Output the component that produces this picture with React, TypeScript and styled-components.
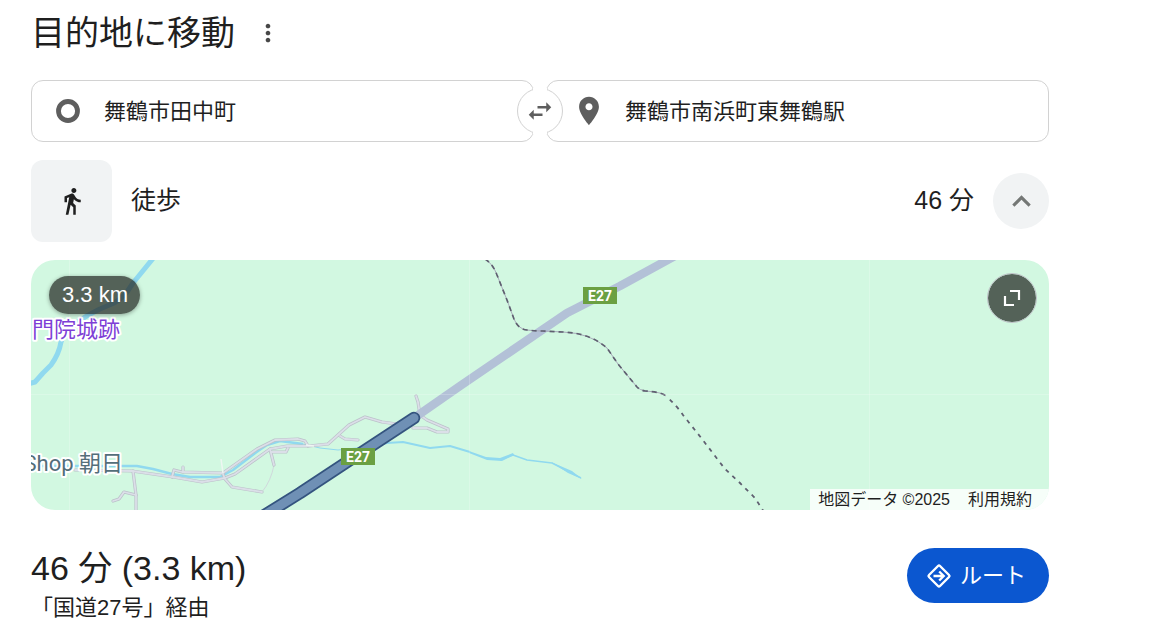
import React from "react";
import styled, { createGlobalStyle } from "styled-components";

const GlobalStyle = createGlobalStyle`
  *, *::before, *::after { box-sizing: border-box; }
  body {
    margin: 0;
    background: #fff;
    color: #1f1f1f;
    font-family: "Liberation Sans", "Noto Sans CJK JP", sans-serif;
  }
  button, input { font-family: inherit; color: inherit; }
  button { border: 0; padding: 0; cursor: pointer; }
  svg { display: block; flex: none; }
`;

const Page = styled.main`
  padding: 8px 116px 12px 31px;
`;

const Header = styled.header`
  display: flex;
  align-items: center;
  gap: 19px;
  height: 50px;
`;

const Title = styled.h1`
  margin: 0;
  font-size: 34px;
  line-height: 50px;
  font-weight: 400;
`;

const MenuButton = styled.button`
  display: flex;
  background: none;
  color: #474747;
`;

const Endpoints = styled.form`
  position: relative;
  display: grid;
  grid-template-columns: 1fr 1fr;
  gap: 12px;
  margin-top: 22px;
`;

const Field = styled.label<{ $inset: number }>`
  min-width: 0;
  display: flex;
  align-items: center;
  gap: 19px;
  height: 62px;
  padding: 0 24px 0 ${(p) => p.$inset}px;
  border: 1px solid #d2d2d2;
  border-radius: 12px;
  color: #5e5e5e;
`;

const FieldInput = styled.input`
  flex: 1;
  min-width: 0;
  padding: 2px 0 0;
  border: 0;
  outline: 0;
  background: none;
  color: #1f1f1f;
  font-size: 22px;
  line-height: 32px;
`;

const SwapButton = styled.button`
  position: absolute;
  top: 50%;
  left: 50%;
  width: 46px;
  height: 46px;
  margin: -23px 0 0 -23px;
  display: flex;
  align-items: center;
  justify-content: center;
  border: 1px solid #d2d2d2;
  border-radius: 50%;
  background: #fff;
  color: #5e5e5e;

  &::before {
    content: "";
    position: absolute;
    top: -1px;
    bottom: -1px;
    left: 15px;
    right: 15px;
    background: #fff;
  }

  svg { position: relative; }
`;

const ModeRow = styled.section`
  display: flex;
  align-items: center;
  gap: 19px;
  margin-top: 18px;
  font-size: 25px;
  line-height: 36px;
`;

const ModeTile = styled.div`
  display: flex;
  align-items: center;
  justify-content: center;
  width: 81px;
  height: 82px;
  border-radius: 12px;
  background: #f1f3f4;
`;

const ModeText = styled.span<{ $grow?: boolean }>`
  flex: ${(p) => (p.$grow ? 1 : "none")};
  padding-bottom: 2px;
`;

const CollapseButton = styled.button`
  display: flex;
  align-items: center;
  justify-content: center;
  width: 56px;
  height: 56px;
  border-radius: 50%;
  background: #f1f3f4;
  color: #747775;
`;

const MapCard = styled.section`
  position: relative;
  height: 250px;
  margin-top: 18px;
  border-radius: 24px;
  overflow: hidden;
  background: #d2f8e1;
`;

const DistancePill = styled.span`
  position: absolute;
  top: 16px;
  left: 18px;
  padding: 0 12px 0 13px;
  border-radius: 19px;
  background: rgba(32, 37, 33, 0.71);
  box-shadow: 0 1px 4px rgba(0, 0, 0, 0.35);
  color: #fff;
  font-size: 22px;
  line-height: 38px;
`;

const ExpandButton = styled.button`
  position: absolute;
  top: 13px;
  right: 12px;
  display: flex;
  align-items: center;
  justify-content: center;
  width: 50px;
  height: 50px;
  border: 1px solid #bdc1c6;
  border-radius: 50%;
  background: rgba(32, 37, 33, 0.71);
  background-clip: padding-box;
  color: #fff;
`;

const Attribution = styled.footer`
  position: absolute;
  right: 0;
  bottom: 0;
  display: flex;
  gap: 18px;
  padding: 0 17px 0 8px;
  background: rgba(255, 255, 255, 0.8);
  color: #1f1f1f;
  font-size: 16px;
  line-height: 21px;
`;

const TermsLink = styled.a`
  color: inherit;
  text-decoration: none;
`;

const Summary = styled.section`
  display: flex;
  align-items: flex-start;
  justify-content: space-between;
  margin-top: 34px;
`;

const Duration = styled.h2`
  margin: 0;
  font-size: 34px;
  line-height: 48px;
  font-weight: 400;
`;

const Via = styled.p`
  margin: 0;
  font-size: 22px;
  line-height: 32px;
`;

const RouteButton = styled.button`
  display: flex;
  align-items: center;
  gap: 8px;
  height: 55px;
  margin-top: 4px;
  padding: 0 23px 0 19px;
  border-radius: 28px;
  background: #0b57d0;
  color: #fff;
  font-size: 22px;
  line-height: 32px;
`;

const MapSvg = styled.svg`
  width: 100%;
  height: 100%;
`;

function Icon({ size, d }: { size: number; d: string }) {
  return (
    <svg width={size} height={size} viewBox="0 0 24 24" fill="currentColor" aria-hidden="true">
      <path d={d} />
    </svg>
  );
}

const icons = {
  more: "M12 8c1.1 0 2-.9 2-2s-.9-2-2-2-2 .9-2 2 .9 2 2 2zm0 2c-1.1 0-2 .9-2 2s.9 2 2 2 2-.9 2-2-.9-2-2-2zm0 6c-1.1 0-2 .9-2 2s.9 2 2 2 2-.9 2-2-.9-2-2-2z",
  pin: "M12 2C8.13 2 5 5.13 5 9c0 5.25 7 13 7 13s7-7.75 7-13c0-3.87-3.13-7-7-7zm0 9.5c-1.38 0-2.5-1.12-2.5-2.5s1.12-2.5 2.5-2.5 2.5 1.12 2.5 2.5-1.12 2.5-2.5 2.5z",
  swap: "M6.99 11L3 15l3.99 4v-3H14v-2H6.99v-3zM21 9l-3.99-4v3H10v2h7.01v3L21 9z",
  walk: "M13.5 5.5c1.1 0 2-.9 2-2s-.9-2-2-2-2 .9-2 2 .9 2 2 2zM9.8 8.9L7 23h2.1l1.8-8 2.1 2v6h2v-7.5l-2.1-2 .6-3C14.8 12 16.8 13 19 13v-2c-1.9 0-3.5-1-4.3-2.4l-1-1.6c-.4-.6-1-1-1.7-1-.3 0-.5.1-.8.1L6 8.3V13h2V9.6l1.8-.7",
  up: "M12 8l-6 6 1.41 1.41L12 10.83l4.59 4.58L18 14z",
};

const localRoads = [
  "M75 470 L132 471 L173 477 L202 482 L225 478 L235 474 L270 449 L287 446 L309 446 L328 444 L349 425 L365 417 L382 422 L397 424",
  "M413 428 L427 428 L437 432 L448 432 L448 429 L427 420 L420 415 L418 402 L416 396",
  "M340 436 L345 439 L358 440",
  "M172 477 L174 470 L182 472 L223 473 L257 449 L275 440 L298 439 L305 441 L308 446",
  "M183 467 L183 472",
  "M223 474 L225 479 L232 487 L262 492",
  "M270 449 L274 465",
  "M271 452 L286 452 L288 448",
  "M133 471 L136 495 L136 511",
  "M136 495 L124 492 L119 499 L113 501",
];

const highway = "M684 251 L620 286 L567 313 L460 386 L414 418";
const route = "M414 418 L350 460 L300 493 L255 521";
const railUpper =
  "M485 259 Q493 264 497 275 L507 300 L514 319 Q518 329 527 330 Q535 331 543 331 L563 332 Q590 333 607 348 L618 364 L637 387 Q640 390 645 391 Q662 392 666 396";
const railLower = "M666 396 Q677 406 683 415 L702 439 L725 469 L740 483 L755 498 L764 512";

function RoadShield({ x, y }: { x: number; y: number }) {
  return (
    <g>
      <rect x={x} y={y} width="34" height="17" fill="#6ba042" />
      <text
        x={x + 17}
        y={y + 14}
        textAnchor="middle"
        fontFamily="Roboto, sans-serif"
        fontSize="14"
        fontWeight="700"
        fill="#fff"
      >
        E27
      </text>
    </g>
  );
}

function RouteMap() {
  return (
    <MapSvg viewBox="31 260 1018 250" preserveAspectRatio="xMidYMid slice" role="img" aria-label="国道27号のルート">
      <g fill="none" strokeLinejoin="round">
        <g stroke="#90d9ef">
          <path strokeWidth="5" d="M155 256 L133 283 L127 292 Q120 300 114 303 L100 309 Q88 315 82 319 Q66 328 61 342 Q59 354 51 365 L43 373 L35 382 L28 384" />
          <path strokeWidth="2.5" d="M40 466 L137 466 L153 469 L172 474 L190 477 L220 477 L233 470 L258 451 L267 445 L280 441 L303 444" />
          <path strokeWidth="1" d="M303 444 L320 448 L338 450 L375 446" />
          <path strokeWidth="2" d="M370 447 L387 443 L403 442 L430 448 L450 446 L470 452" />
          <path strokeWidth="1.5" d="M500 460 L513 455 L527 460 L552 463 L581 478" />
        </g>
        <path fill="#90d9ef" d="M469 451 L486 457 L500 458 L513 453 L514 455 L502 461 L487 460 L469 453 Z M551 462 L572 471 L582 479 L568 473 Z" />
        <path stroke="#d0d8dc" strokeWidth="1" d="M262 492 Q271 481 274 465" />
        <g strokeLinecap="round">
          {localRoads.map((d) => (
            <path key={d} d={d} stroke="#bcc1ca" strokeWidth="3.2" />
          ))}
          {localRoads.map((d) => (
            <path key={d} d={d} stroke="#dbdfe8" strokeWidth="1.8" />
          ))}
        </g>
        <path stroke="#eef6f2" strokeWidth="1.5" d="M221 459 L223 473 M306 445 L314 446" />
        <path d={highway} stroke="#b3c1d7" strokeWidth="8.5" />
        <path d={railUpper} stroke="#a6a9b8" strokeWidth="1" />
        <path d={railUpper} stroke="#5f5f70" strokeWidth="1.7" strokeDasharray="5 4" />
        <path d={railLower} stroke="#5f5f70" strokeWidth="1.8" strokeDasharray="4 5" strokeDashoffset="4" />
        <path d={route} stroke="#34547f" strokeWidth="12.5" strokeLinecap="round" />
        <path d={route} stroke="#6f90b5" strokeWidth="9" strokeLinecap="round" />
        <path stroke="#fff" strokeOpacity="0.2" strokeWidth="1" d="M31 394.5 H1049 M69.5 260 V510 M469.5 260 V510 M869.5 260 V510" />
      </g>
      <RoadShield x={583} y={287} />
      <RoadShield x={341} y={448} />
      <g
        fontFamily='Roboto, "Noto Sans CJK JP", sans-serif'
        fontSize="22"
        stroke="#fff"
        strokeWidth="4"
        strokeLinejoin="round"
        paintOrder="stroke"
      >
        <text x="32" y="337" fill="#7e3fd6">門院城跡</text>
        <text x="123" y="471" textAnchor="end" fill="#546e7a">Shop 朝日</text>
      </g>
    </MapSvg>
  );
}

export default function App() {
  return (
    <>
      <GlobalStyle />
      <Page>
        <Header>
          <Title>目的地に移動</Title>
          <MenuButton type="button" aria-label="その他">
            <Icon size={28} d={icons.more} />
          </MenuButton>
        </Header>

        <Endpoints onSubmit={(e) => e.preventDefault()}>
          <Field $inset={19}>
            <svg width="34" height="34" viewBox="0 0 34 34" fill="none" aria-hidden="true">
              <circle cx="17" cy="17" r="9.5" stroke="currentColor" strokeWidth="4.8" />
            </svg>
            <FieldInput aria-label="出発地" defaultValue="舞鶴市田中町" />
          </Field>
          <Field $inset={25}>
            <Icon size={34} d={icons.pin} />
            <FieldInput aria-label="目的地" defaultValue="舞鶴市南浜町東舞鶴駅" />
          </Field>
          <SwapButton type="button" aria-label="出発地と目的地を入れ替える">
            <Icon size={30} d={icons.swap} />
          </SwapButton>
        </Endpoints>

        <ModeRow>
          <ModeTile>
            <Icon size={30} d={icons.walk} />
          </ModeTile>
          <ModeText $grow>徒歩</ModeText>
          <ModeText>46 分</ModeText>
          <CollapseButton type="button" aria-label="折りたたむ">
            <Icon size={37} d={icons.up} />
          </CollapseButton>
        </ModeRow>

        <MapCard>
          <RouteMap />
          <DistancePill>3.3 km</DistancePill>
          <ExpandButton type="button" aria-label="地図を拡大">
            <svg width="18" height="18" viewBox="0 0 18 18" fill="none" stroke="currentColor" strokeWidth="2.2" aria-hidden="true">
              <path d="M7 2 H16 V11 M2 7 V16 H11" />
            </svg>
          </ExpandButton>
          <Attribution>
            <span>地図データ ©2025</span>
            <TermsLink href="#terms">利用規約</TermsLink>
          </Attribution>
        </MapCard>

        <Summary>
          <div>
            <Duration>46 分 (3.3 km)</Duration>
            <Via>「国道27号」経由</Via>
          </div>
          <RouteButton type="button">
            <svg width="26" height="26" viewBox="0 0 26 26" fill="none" stroke="currentColor" strokeWidth="2.4" strokeLinejoin="round" aria-hidden="true">
              <path d="M12 3 Q13 2 14 3 L23 12 Q24 13 23 14 L14 23 Q13 24 12 23 L3 14 Q2 13 3 12 Z" />
              <path d="M7.5 13 H17.5 M13.2 8.5 L17.7 13 L13.2 17.5" strokeLinejoin="miter" />
            </svg>
            ルート
          </RouteButton>
        </Summary>
      </Page>
    </>
  );
}
